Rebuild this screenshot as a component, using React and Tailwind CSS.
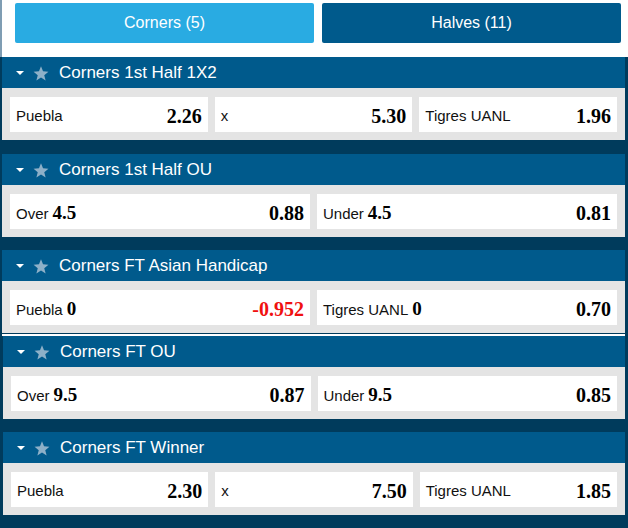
import React from "react";

const sans = { fontFamily: '"Liberation Sans", Arial, sans-serif' };
const serif = { fontFamily: '"Liberation Serif", "Times New Roman", serif' };

const markets = [
  {
    title: "Corners 1st Half 1X2",
    cells: [
      { label: "Puebla", odds: "2.26" },
      { label: "x", odds: "5.30" },
      { label: "Tigres UANL", odds: "1.96" },
    ],
  },
  {
    title: "Corners 1st Half OU",
    cells: [
      { label: "Over", line: "4.5", odds: "0.88" },
      { label: "Under", line: "4.5", odds: "0.81" },
    ],
  },
  {
    title: "Corners FT Asian Handicap",
    cells: [
      { label: "Puebla", line: "0", odds: "-0.952", negative: true },
      { label: "Tigres UANL", line: "0", odds: "0.70" },
    ],
  },
  {
    title: "Corners FT OU",
    shifted: true,
    cells: [
      { label: "Over", line: "9.5", odds: "0.87" },
      { label: "Under", line: "9.5", odds: "0.85" },
    ],
  },
  {
    title: "Corners FT Winner",
    shifted: true,
    cells: [
      { label: "Puebla", odds: "2.30" },
      { label: "x", odds: "7.50" },
      { label: "Tigres UANL", odds: "1.85" },
    ],
  },
];

function Star() {
  return (
    <svg width="16" height="15" viewBox="0 0 24 23" className="shrink-0">
      <polygon
        points="12,0.5 15.1,8.2 23.4,8.7 17,14 19.1,22.2 12,17.7 4.9,22.2 7,14 0.6,8.7 8.9,8.2"
        fill="#8db0c8"
      />
    </svg>
  );
}

function Market({ market }) {
  return (
    <div className={market.shifted ? "ml-[1px]" : ""}>
      <div className="flex h-[31px] items-center bg-[#005a8c] pl-[14px] pt-[1px]">
        <span className="mr-[9px] h-0 w-0 border-x-[4px] border-t-[4px] border-x-transparent border-t-white" />
        <Star />
        <span className="ml-[10px] text-[17px] text-white" style={sans}>
          {market.title}
        </span>
      </div>
      <div className="flex gap-[7px] bg-[#e4e4e4] px-[8px] pt-[9px] pb-[8px]">
        {market.cells.map((cell, i) => (
          <div key={i} className="flex h-[35px] flex-1 items-center justify-between bg-white px-[6px] pt-[3px]">
            <span className="text-[15px] text-[#111]" style={sans}>
              {cell.label}
              {cell.line ? (
                <span className="ml-[4px] text-[19px] font-bold text-black" style={serif}>
                  {cell.line}
                </span>
              ) : null}
            </span>
            <span
              className={`text-[20px] font-bold ${cell.negative ? "text-[#f01010]" : "text-black"}`}
              style={serif}
            >
              {cell.odds}
            </span>
          </div>
        ))}
      </div>
    </div>
  );
}

export default function App() {
  return (
    <div className="h-[528px] w-[628px] overflow-hidden bg-[#003b5c]">
      <div className="flex h-[57px] gap-[8px] border-l-2 border-[#7f9db3] bg-white pt-[3px] pl-[13px] pr-[7px]">
        <div className="flex h-[40px] flex-1 items-center justify-center rounded-[2px] bg-[#29abe2] text-[16px] text-white" style={sans}>
          Corners (5)
        </div>
        <div className="flex h-[40px] flex-1 items-center justify-center rounded-[2px] bg-[#005a8c] text-[16px] text-white" style={sans}>
          Halves (11)
        </div>
      </div>
      <div className="flex flex-col pl-[2px] pr-[3px]">
        <Market market={markets[0]} />
        <div className="h-[14px]" />
        <Market market={markets[1]} />
        <div className="h-[13px]" />
        <Market market={markets[2]} />
        <div className="h-[1px]" />
        <div className="h-[2px] bg-white" />
        <Market market={markets[3]} />
        <div className="h-[13px]" />
        <Market market={markets[4]} />
      </div>
    </div>
  );
}
